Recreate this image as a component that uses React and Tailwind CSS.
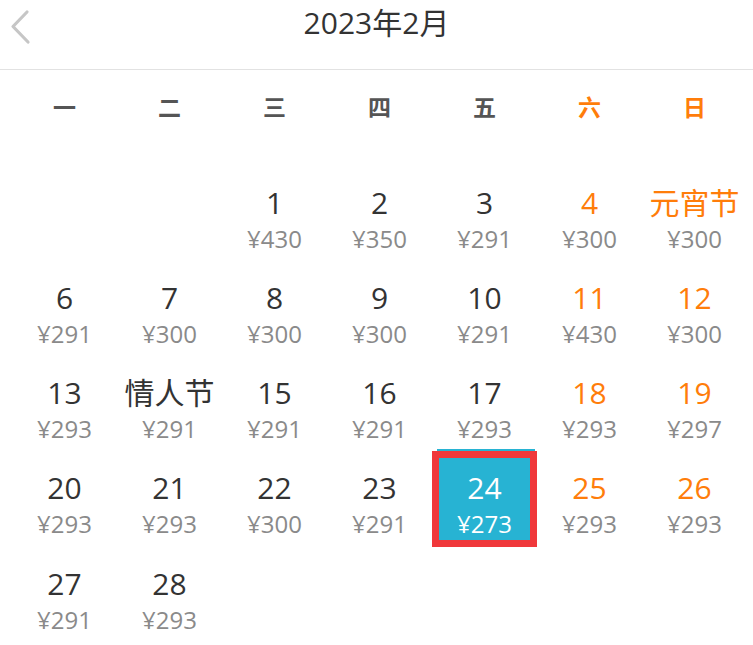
import React from "react";

const weekdays = [
  { label: "一", weekend: false },
  { label: "二", weekend: false },
  { label: "三", weekend: false },
  { label: "四", weekend: false },
  { label: "五", weekend: false },
  { label: "六", weekend: true },
  { label: "日", weekend: true },
];

// leading blanks for Feb 2023 (starts on Wednesday)
const days = [
  null,
  null,
  { d: "1", p: 430 },
  { d: "2", p: 350 },
  { d: "3", p: 291 },
  { d: "4", p: 300, weekend: true },
  { d: "元宵节", p: 300, weekend: true },
  { d: "6", p: 291 },
  { d: "7", p: 300 },
  { d: "8", p: 300 },
  { d: "9", p: 300 },
  { d: "10", p: 291 },
  { d: "11", p: 430, weekend: true },
  { d: "12", p: 300, weekend: true },
  { d: "13", p: 293 },
  { d: "情人节", p: 291 },
  { d: "15", p: 291 },
  { d: "16", p: 291 },
  { d: "17", p: 293 },
  { d: "18", p: 293, weekend: true },
  { d: "19", p: 297, weekend: true },
  { d: "20", p: 293 },
  { d: "21", p: 293 },
  { d: "22", p: 300 },
  { d: "23", p: 291 },
  { d: "24", p: 273, selected: true },
  { d: "25", p: 293, weekend: true },
  { d: "26", p: 293, weekend: true },
  { d: "27", p: 291 },
  { d: "28", p: 293 },
];

function DayCell({ day }) {
  if (!day) return <div className="h-[95px]" />;
  if (day.selected) {
    return (
      <div className="relative h-[96px] border-[7px] border-[#f0383b] bg-[#27b3d3] text-white flex flex-col items-center pt-[12px]">
        <div className="absolute -top-[9px] -left-[2px] -right-[5px] h-[2px] bg-[#27b3d3]" />
        <div className="text-[30px] leading-[36px]">{day.d}</div>
        <div className="text-[24px] leading-[30px] mt-[3px]">¥{day.p}</div>
      </div>
    );
  }
  return (
    <div className="h-[95px] flex flex-col items-center pt-[19px]">
      <div
        className={`text-[30px] leading-[36px] ${
          day.weekend ? "text-[#ff7d0a]" : "text-[#333333]"
        }`}
      >
        {day.d}
      </div>
      <div className="text-[24px] leading-[30px] mt-[3px] text-[#8a8a8a]">¥{day.p}</div>
    </div>
  );
}

export default function App() {
  return (
    <div
      className="w-[753px] h-[645px] bg-white overflow-hidden"
      style={{ fontFamily: "'Open Sans', 'Noto Sans CJK SC', sans-serif" }}
    >
      <div className="relative h-[70px] border-b border-[#e2e2e2] flex justify-center">
        <svg
          className="absolute left-[9px] top-[9px]"
          width="22"
          height="36"
          viewBox="0 0 22 36"
          fill="none"
        >
          <path
            d="M18 3 L4 17.5 L19 33"
            stroke="#c6c6c6"
            strokeWidth="3.2"
            strokeLinecap="round"
            strokeLinejoin="round"
          />
        </svg>
        <div className="pt-[3px] text-[30px] leading-[40px] text-[#333333]">2023年2月</div>
      </div>

      <div className="pl-[12px] grid grid-cols-[repeat(7,105px)]">
        {weekdays.map((w) => (
          <div
            key={w.label}
            className={`h-[96px] pt-[22px] text-center text-[23px] leading-[30px] font-bold ${
              w.weekend ? "text-[#ff7d0a]" : "text-[#555555]"
            }`}
          >
            {w.label}
          </div>
        ))}
        {days.map((day, i) => (
          <DayCell key={i} day={day} />
        ))}
      </div>
    </div>
  );
}
